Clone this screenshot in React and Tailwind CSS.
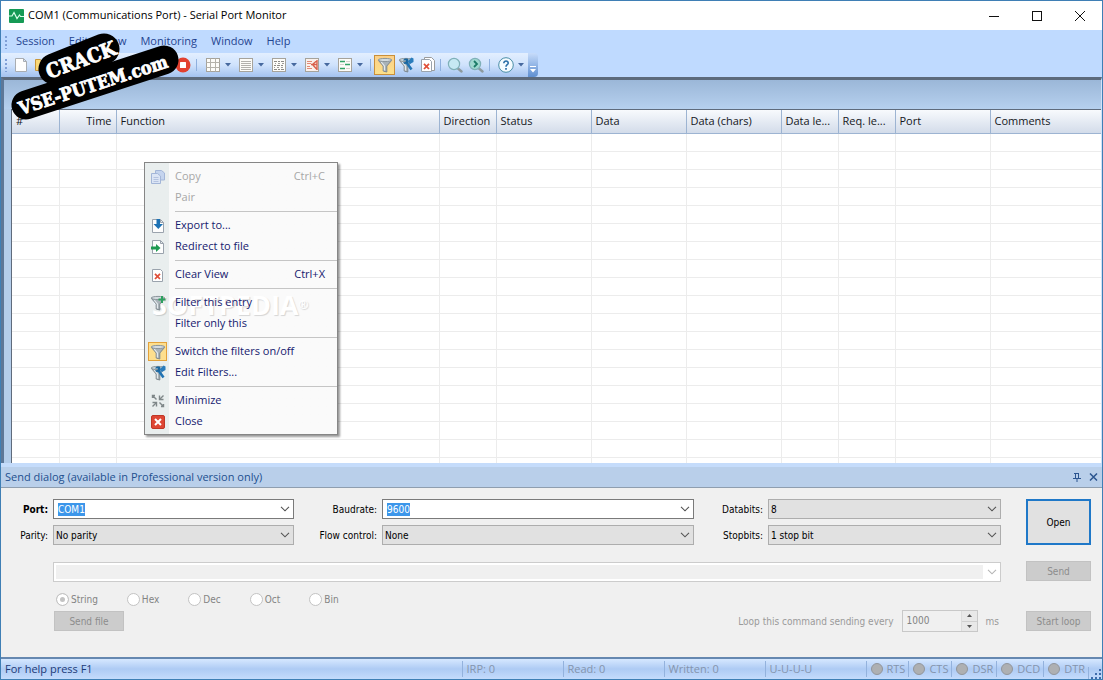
import React, { useState } from 'react';

const columns = [
  { label: '#', width: 'w-[47px]' },
  { label: 'Time', width: 'w-[57px]', align: 'text-right' },
  { label: 'Function', width: 'w-[323px]' },
  { label: 'Direction', width: 'w-[57px]' },
  { label: 'Status', width: 'w-[95px]' },
  { label: 'Data', width: 'w-[95px]' },
  { label: 'Data (chars)', width: 'w-[95px]' },
  { label: 'Data le...', width: 'w-[57px]' },
  { label: 'Req. le...', width: 'w-[57px]' },
  { label: 'Port', width: 'w-[95px]' },
  { label: 'Comments', width: '' }
];

const rows = Array.from({ length: 40 }, (_, i) => i);

const Icon = ({ size = 16, children }) => (
  <svg width={size} height={size} viewBox="0 0 16 16" fill="none" className="shrink-0" aria-hidden="true">
    {children}
  </svg>
);

const Page = ({ stroke = '#9aa3ad' }) => (
  <path d="M2.5 1.5h8l3 3v10h-11z M10.5 1.5v3h3" fill="#fdfdfd" stroke={stroke} />
);

const FunnelShape = () => (
  <>
    <path d="M1.2 3.2 6.2 9v5l3.6 1V9l5-5.8z" fill="#a9b3b9" stroke="#7b868c" />
    <path d="M4.2 5 7.4 9v4.5" stroke="#e4eaed" strokeWidth="1.2" />
    <ellipse cx="8" cy="3" rx="6.8" ry="1.6" fill="#d3dbdf" stroke="#8a959b" />
  </>
);

const NewIcon = () => (
  <Icon><path d="M2.5 1.5h8l3 3v10h-11z M10.5 1.5v3h3" fill="#fefefe" stroke="#a9adb2" /></Icon>
);

const FolderIcon = () => (
  <Icon><path d="M1.5 2.5h5l1 2h7v9h-13z" fill="#f9d978" stroke="#c9973a" /></Icon>
);

const StopIcon = () => (
  <Icon>
    <circle cx="8" cy="8" r="7.5" fill="#e2402f" />
    <rect x="5" y="5" width="6" height="6" rx="0.5" fill="#fff" />
  </Icon>
);

const GridIcon = () => (
  <Icon>
    <rect x="1.5" y="1.5" width="13" height="13" fill="#fdfcf8" stroke="#a6a39b" />
    <path d="M5.5 1.5v13M10.5 1.5v13M1.5 5.5h13M1.5 10.5h13" stroke="#b5b2aa" />
  </Icon>
);

const LinesIcon = () => (
  <Icon>
    <rect x="1.5" y="1.5" width="13" height="13" fill="#fdfcf8" stroke="#a6a39b" />
    <path d="M3 4.5h10M3 6.5h10M3 8.5h10M3 10.5h10M3 12.5h10" stroke="#b3b1ac" />
  </Icon>
);

const DumpIcon = () => (
  <Icon>
    <rect x="1.5" y="1.5" width="13" height="13" fill="#fdfcf8" stroke="#a6a39b" />
    <path d="M3 4.5h3M7 4.5h2M10 4.5h3M3 8.5h2M6 8.5h3M10 8.5h2M3 12.5h3M7 12.5h2M10 12.5h3" stroke="#8c8a86" />
    <path d="M4 6.5h1M7 6.5h2M11 6.5h2M3 10.5h1M6 10.5h2M10 10.5h2" stroke="#a09e9a" />
  </Icon>
);

const CompareIcon = () => (
  <Icon>
    <rect x="1.5" y="1.5" width="13" height="13" fill="#faf0eb" stroke="#a6a39b" />
    <path d="M3 4.5h5M3 6.5h4M3 9.5h3M3 11.5h5" stroke="#e28a76" />
    <path d="M13 3.5 8.5 7.5l4.5 5M7 7.5h6M13 3v10" stroke="#d8604c" strokeWidth="1.4" />
  </Icon>
);

const SplitIcon = () => (
  <Icon>
    <rect x="1.5" y="1.5" width="13" height="13" fill="#fdfcf8" stroke="#a6a39b" />
    <path d="M3 4.5h5M8 7.5h5M3 11.5h5" stroke="#34a367" strokeWidth="1.5" />
    <path d="M9 4.5h4M3 7.5h4M9 11.5h4" stroke="#d5d2cc" />
  </Icon>
);

const FilterIcon = () => <Icon><FunnelShape /></Icon>;

const EditFilterIcon = () => (
  <Icon>
    <FunnelShape />
    <path d="m8.5 5.5 5 7" stroke="#2173b3" strokeWidth="2.6" />
    <path d="M5 3.5c1-2.5 4.5-2.5 5.500-1L10 6.5 6.5 7 5 5.5l2.500-.5.5-1.5z" fill="#1b679f" />
    <path d="m9.5 4.5 4-4 2 1v3.5l-3.500 2z" fill="#2a7cbc" />
  </Icon>
);

const AddFilterIcon = () => (
  <Icon>
    <FunnelShape />
    <path d="M12 1v7M8.5 4.5h7" stroke="#2da05f" strokeWidth="2" />
  </Icon>
);

const ClearIcon = ({ stacked }) => (
  <Icon>
    {stacked && <path d="M5.5.5h7l3 3v10h-10z" fill="#fff" stroke="#9b9b9b" />}
    <path d="M2.5 2.5h8l2 2v10h-10z" fill="#fff" stroke="#9aa3ad" />
    <path d="m5 6.8 5 5.2m0-5.2-5 5.2" stroke="#e0503a" strokeWidth="1.8" />
  </Icon>
);

const SearchIcon = ({ next }) => (
  <Icon>
    <path d="m11 11.5 3.5 3" stroke="#8d9a9f" strokeWidth="2.4" strokeLinecap="round" />
    <circle cx="7" cy="7" r="5.6" fill={next ? '#9fd8cf' : '#c6e8f3'} stroke="#7fb0b8" strokeWidth="1.2" />
    {next && <path d="m6 4 3 3-3 3" stroke="#1b7a66" strokeWidth="1.8" />}
  </Icon>
);

const HelpIcon = () => (
  <Icon>
    <circle cx="8" cy="8" r="7.3" fill="#f4fbff" stroke="#4a8ea6" />
    <path d="M5.8 6.2c0-3 4.6-2.8 4.4 0C10.1 7.8 8 7.7 8 9.8" stroke="#2c6fa8" strokeWidth="1.6" />
    <path d="M8 11v1.7" stroke="#2c6fa8" strokeWidth="1.7" />
  </Icon>
);

const CopyIcon = () => (
  <Icon>
    <path d="M5.5 1.5h6l3 2.5v7h-9z" fill="#c4d4ee" stroke="#a3b6d8" />
    <path d="M1.5 4.5h6l3 2.5v7.5h-9z" fill="#dbe5f5" stroke="#a3b6d8" />
    <path d="M3.5 8.5h5M3.5 10.5h5M3.5 12.5h5" stroke="#b4c3e0" />
  </Icon>
);

const ExportIcon = () => (
  <Icon>
    <Page />
    <path d="M6.5 1h3.5v5h3l-4.7 5-4.8-5h3z" fill="#1d72b4" />
  </Icon>
);

const RedirectIcon = () => (
  <Icon>
    <Page />
    <path d="M1 7.5h5V5l4.5 4-4.5 4v-2.500H1z" fill="#1f9a52" />
  </Icon>
);

const MinimizeIcon = () => (
  <Icon>
    <path d="M2.5 5V2.5H5M2.5 2.5l4 4M13.5 2.5 10 6M2.5 13.5 6 10M13.5 13.5l-4-4M13.5 11v2.500H11" stroke="#7f8789" strokeWidth="1.4" />
    <path d="M9.5 2.5v4h4M2.5 9.5h4v4" stroke="#7f8789" strokeWidth="1.4" />
  </Icon>
);

const CloseIcon = () => (
  <Icon>
    <rect x="1.5" y="1.5" width="13" height="13" rx="1.5" fill="#de4634" stroke="#bf3727" />
    <path d="m5 5 6 6m0-6-6 6" stroke="#fff" strokeWidth="2" />
  </Icon>
);

const Chevron = ({ color = '#555' }) => (
  <svg width="10" height="6" viewBox="0 0 10 6" fill="none" aria-hidden="true">
    <path d="m1 .8 4 4 4-4" stroke={color} strokeWidth="1.1" />
  </svg>
);

const TitleBar = () => (
  <header className="flex h-[29px] shrink-0 items-center bg-white pr-px pl-2">
    <svg width="15" height="14" viewBox="0 0 15 14" aria-hidden="true">
      <rect width="15" height="14" rx="1" fill="#159a55" />
      <path d="M0 7h3l2-3.5 3 6L10.5 6l1 1.5H15" fill="none" stroke="#d9ffe9" strokeWidth="1.2" />
    </svg>
    <h1 className="ml-1 flex-1 text-[11px] text-black">COM1 (Communications Port) - Serial Port Monitor</h1>
    <button aria-label="Minimize" className="flex h-full w-[43px] items-center justify-center">
      <svg width="10" height="10"><path d="M0 5.5h10" stroke="#111" /></svg>
    </button>
    <button aria-label="Maximize" className="flex h-full w-[43px] items-center justify-center">
      <svg width="10" height="10"><rect x=".5" y=".5" width="9" height="9" fill="none" stroke="#111" /></svg>
    </button>
    <button aria-label="Close" className="flex h-full w-[43px] items-center justify-center">
      <svg width="10" height="10"><path d="m0 0 10 10M10 0 0 10" stroke="#111" /></svg>
    </button>
  </header>
);

const Grip = () => (
  <svg width="3" height="14" className="shrink-0" aria-hidden="true">
    <path d="M1 1v13" stroke="#7f9fd6" strokeWidth="2" strokeDasharray="2 2" />
  </svg>
);

const MenuBar = () => (
  <nav className="flex h-[23px] shrink-0 items-center bg-[#bfdaff] pl-1 text-[11px] text-[#1f4490]">
    <Grip />
    <div className="flex gap-[14px] pl-2">
      {['Session', 'Edit', 'View', 'Monitoring', 'Window', 'Help'].map((item) => (
        <button key={item}>{item}</button>
      ))}
    </div>
  </nav>
);

const Separator = () => (
  <span className="flex w-[7px] justify-center"><span className="h-3 w-px bg-[#8fb0de]" /></span>
);

const ToolButton = ({ label, className = '', children }) => (
  <button aria-label={label} className={`flex h-5 w-[21px] items-center justify-center ${className}`}>
    {children}
  </button>
);

const DropButton = ({ label, children }) => (
  <button aria-label={label} className="flex h-5 w-[33px] items-center gap-1 pl-[3px]">
    {children}
    <svg width="6" height="4" aria-hidden="true"><path d="M0 0h6L3 3.5z" fill="#47699f" /></svg>
  </button>
);

const Toolbar = () => (
  <div className="flex h-6 shrink-0 bg-[#bfdaff]">
    <div className="flex items-center bg-linear-to-b from-[#e3efff] via-[#cfe2fc] to-[#a3c2ef] pl-1">
      <Grip />
      <ToolButton label="New" className="ml-0.5"><NewIcon /></ToolButton>
      <ToolButton label="Open session"><FolderIcon /></ToolButton>
      <ToolButton label="Stop" className="ml-[120px]"><StopIcon /></ToolButton>
      <Separator />
      <div className="flex pl-0.5">
        <DropButton label="Table view"><GridIcon /></DropButton>
        <DropButton label="Line view"><LinesIcon /></DropButton>
        <DropButton label="Dump view"><DumpIcon /></DropButton>
        <DropButton label="Compare view"><CompareIcon /></DropButton>
        <DropButton label="Terminal view"><SplitIcon /></DropButton>
      </div>
      <Separator />
      <ToolButton label="Switch filters" className="border border-[#c98f3a] bg-linear-to-b from-[#fcd088] to-[#fbe08a]"><FilterIcon /></ToolButton>
      <ToolButton label="Edit filters"><EditFilterIcon /></ToolButton>
      <ToolButton label="Clear"><ClearIcon stacked /></ToolButton>
      <Separator />
      <ToolButton label="Find"><SearchIcon /></ToolButton>
      <ToolButton label="Find next"><SearchIcon next /></ToolButton>
      <Separator />
      <div className="flex pl-0.5"><DropButton label="Help"><HelpIcon /></DropButton></div>
    </div>
    <button aria-label="Toolbar options" className="flex w-[10px] items-end justify-center rounded-r bg-linear-to-b from-[#c7dcfa] to-[#5f8fd0] pb-1">
      <svg width="6" height="7" aria-hidden="true">
        <path d="M0 .5h6" stroke="#fff" />
        <path d="M0 3h6L3 6.5z" fill="#fff" />
      </svg>
    </button>
  </div>
);

const DataGrid = () => (
  <table className="w-full table-fixed border-collapse text-[11px] text-[#15171c]">
    <thead>
      <tr className="h-[23px] bg-linear-to-b from-[#f8fafd] to-[#d3dcea]">
        {columns.map((col) => (
          <th
            key={col.label}
            className={`overflow-hidden border-r border-b border-[#9db4d2] px-1 font-normal whitespace-nowrap last:border-r-0 ${col.width} ${col.align || 'text-left'}`}
          >
            {col.label}
          </th>
        ))}
      </tr>
    </thead>
    <tbody>
      {rows.map((row) => (
        <tr key={row} className="h-[18px]">
          {columns.map((col) => (
            <td key={col.label} className="border-r border-b border-[#ececec] last:border-r-0" />
          ))}
        </tr>
      ))}
    </tbody>
  </table>
);

const menuGroups = [
  [
    { label: 'Copy', shortcut: 'Ctrl+C', icon: <CopyIcon />, disabled: true },
    { label: 'Pair', disabled: true }
  ],
  [
    { label: 'Export to...', icon: <ExportIcon /> },
    { label: 'Redirect to file', icon: <RedirectIcon /> }
  ],
  [{ label: 'Clear View', shortcut: 'Ctrl+X', icon: <ClearIcon /> }],
  [
    { label: 'Filter this entry', icon: <AddFilterIcon /> },
    { label: 'Filter only this' }
  ],
  [
    { label: 'Switch the filters on/off', icon: <FilterIcon />, active: true },
    { label: 'Edit Filters...', icon: <EditFilterIcon /> }
  ],
  [
    { label: 'Minimize', icon: <MinimizeIcon /> },
    { label: 'Close', icon: <CloseIcon /> }
  ]
];

const ContextMenu = () => (
  <div className="absolute top-[161px] left-[143px] w-[194px] border border-[#868686] bg-linear-to-r from-[#e9eeee] from-[24px] to-[#fafafa] to-[24px] pt-[3px] pb-0.5 text-[11px] shadow-[2px_2px_2px_rgba(0,0,0,0.4)]">
    <span className="pointer-events-none absolute top-[124px] left-[7px] text-[27px] leading-9 font-bold text-white [text-shadow:1px_1px_1px_rgba(0,0,0,0.15)]">
      SOFTPEDIA<sup className="text-[12px]">®</sup>
    </span>
    {menuGroups.map((group, index) => (
      <div key={index} className="relative">
        {index > 0 && (
          <div className="flex h-[7px] items-center pl-[30px]"><span className="h-px w-full bg-[#c5c5c5]" /></div>
        )}
        {group.map((item) => (
          <button
            key={item.label}
            disabled={item.disabled}
            className={`flex h-[21px] w-full items-center pr-3 pl-[3px] text-left ${item.disabled ? 'text-[#a7a7a7]' : 'text-[#15206e]'}`}
          >
            <span className={`flex size-[19px] items-center justify-center border ${item.active ? 'border-[#e3a13a] bg-[#fddf8e]' : 'border-transparent'}`}>
              {item.icon}
            </span>
            <span className="ml-2 flex-1">{item.label}</span>
            <span>{item.shortcut}</span>
          </button>
        ))}
      </div>
    ))}
  </div>
);

const Label = ({ htmlFor, bold, children }) => (
  <label htmlFor={htmlFor} className={`pr-[5px] text-right ${bold ? 'font-bold' : ''}`}>{children}</label>
);

const ComboBox = ({ id, value }) => {
  const [text, setText] = useState(value);

  return (
    <div className="flex h-5 items-center border border-[#7a7a7a] bg-white pr-[3px] pl-1">
      <input
        id={id}
        value={text}
        onChange={(e) => setText(e.target.value)}
        className="h-[13px] field-sizing-content bg-[#3c96ea] text-white outline-none"
      />
      <button aria-label={`Show ${id} list`} className="ml-auto"><Chevron /></button>
    </div>
  );
};

const Select = ({ id, options }) => (
  <div className="relative">
    <select id={id} className="block h-5 w-full appearance-none border border-[#adadad] bg-[#e1e1e1] px-0.5 text-black outline-none">
      {options.map((option) => <option key={option}>{option}</option>)}
    </select>
    <span className="pointer-events-none absolute top-[7px] right-1"><Chevron /></span>
  </div>
);

const SendDialog = () => (
  <section className="shrink-0">
    <div className="flex h-[25px] items-center border-t-4 border-b border-t-[#c5dcfb] border-b-[#8f9eaf] bg-[#b9cfea] pr-1 pl-1 text-[11px] text-[#23508f]">
      <h2 className="flex-1">Send dialog (available in Professional version only)</h2>
      <button aria-label="Pin" className="mr-2">
        <svg width="8" height="9" fill="none" stroke="#2c5590"><path d="M2.5 0v5M1 .5h5M5.5 0v5M0 5.5h8M4 6v3" /></svg>
      </button>
      <button aria-label="Close dialog">
        <svg width="9" height="8" fill="none" stroke="#2c5590" strokeWidth="1.5"><path d="m1 .5 7 7m0-7-7 7" /></svg>
      </button>
    </div>

    <form className="flex h-[169px] gap-[25px] bg-[#f0f0f0] pt-[11px] pr-[11px] font-['DejaVu_Sans_Condensed','DejaVu_Sans',sans-serif] text-[10px] text-black" onSubmit={(e) => e.preventDefault()}>
      <div className="flex min-w-0 flex-1 flex-col">
        <div className="grid grid-cols-[52px_241fr_88px_312fr_74px_233fr] items-center gap-y-[6px]">
          <Label htmlFor="port" bold>Port:</Label>
          <ComboBox id="port" value="COM1" />
          <Label htmlFor="baudrate">Baudrate:</Label>
          <ComboBox id="baudrate" value="9600" />
          <Label htmlFor="databits">Databits:</Label>
          <Select id="databits" options={['8', '7', '6', '5']} />
          <Label htmlFor="parity">Parity:</Label>
          <Select id="parity" options={['No parity', 'Odd', 'Even']} />
          <Label htmlFor="flow">Flow control:</Label>
          <Select id="flow" options={['None', 'Hardware', 'Software']} />
          <Label htmlFor="stopbits">Stopbits:</Label>
          <Select id="stopbits" options={['1 stop bit', '2 stop bits']} />
        </div>

        <div className="mt-[17px] ml-[52px] flex h-5 items-center border border-[#ccc] bg-white p-0.5">
          <input aria-label="Command" disabled className="h-full min-w-0 flex-1 bg-[#f0f0f0]" />
          <button disabled aria-label="Show command list" className="pr-px pl-1"><Chevron color="#b5b5b5" /></button>
        </div>

        <div className="mt-[10px] ml-[55px] flex h-[14px] items-center gap-[29px] text-[#838383]">
          {['String', 'Hex', 'Dec', 'Oct', 'Bin'].map((mode) => (
            <label key={mode} className="flex items-center gap-0.5">
              <input
                type="radio"
                name="mode"
                disabled
                defaultChecked={mode === 'String'}
                className="size-[13px] appearance-none rounded-full border border-[#c3c3c3] bg-white checked:bg-[#c3c3c3] checked:shadow-[inset_0_0_0_3px_#fff]"
              />
              {mode}
            </label>
          ))}
        </div>

        <div className="mt-1 ml-[53px] flex h-[22px] items-center pr-0.5 text-[#9a9a9a]">
          <button disabled className="h-5 w-[70px] border border-[#c2c2c2] bg-[#cccccc] text-[#8c8c8c]">Send file</button>
          <label htmlFor="loop" className="ml-auto">Loop this command sending every</label>
          <div className="mr-2 ml-2 flex h-[22px] w-[76px] border border-[#c8c8c8] bg-[#f0f0f0]">
            <input id="loop" type="number" disabled defaultValue="1000" className="h-[18px] min-w-0 flex-1 [appearance:textfield] pl-1 text-[#838383]" />
            <div className="flex w-4 flex-col border-l border-[#dcdcdc] bg-[#e8e8e8]">
              <button disabled aria-label="Increase" className="flex flex-1 items-center justify-center border-b border-[#d0d0d0]">
                <svg width="5" height="3"><path d="M0 3h5L2.5 0z" fill="#555" /></svg>
              </button>
              <button disabled aria-label="Decrease" className="flex flex-1 items-center justify-center">
                <svg width="5" height="3"><path d="M0 0h5L2.5 3z" fill="#555" /></svg>
              </button>
            </div>
          </div>
          <span>ms</span>
        </div>
      </div>

      <div className="flex w-[65px] shrink-0 flex-col">
        <button className="h-[46px] border-2 border-[#1f78c8] bg-[#e1e1e1]">Open</button>
        <button disabled className="mt-4 h-5 border border-[#c2c2c2] bg-[#cccccc] text-[#8c8c8c]">Send</button>
        <button disabled className="mt-[30px] h-5 border border-[#c2c2c2] bg-[#cccccc] text-[#8c8c8c]">Start loop</button>
      </div>
    </form>
  </section>
);

const counters = ['IRP: 0', 'Read: 0', 'Written: 0', 'U-U-U-U'];

const lines = ['RTS', 'CTS', 'DSR', 'DCD', 'DTR'];

const StatusBar = () => (
  <footer className="flex h-[22px] shrink-0 items-center border-t-2 border-[#6688b0] bg-linear-to-b from-[#d6e8ff] via-[#aecbf4] to-[#c4dbfc] text-[11px] text-[#8494ad]">
    <span className="flex-1 pl-1 text-[#1c3a78]">For help press F1</span>
    {counters.map((counter) => (
      <span key={counter} className="w-[101px] border-l border-[#93b2dd] pl-1">{counter}</span>
    ))}
    {lines.map((line) => (
      <span key={line} className="flex items-center gap-1 border-l border-[#93b2dd] pr-[3px] pl-1">
        <span className="size-3 shrink-0 rounded-full border border-[#92969c] bg-[#aeb0b2]" />
        {line}
      </span>
    ))}
    <svg width="14" height="12" className="self-end border-l border-[#93b2dd]" aria-hidden="true">
      <path d="M10 2h2v2h-2zM10 6h2v2h-2zM10 10h2v2h-2zM6 6h2v2H6zM6 10h2v2H6zM2 10h2v2H2z" fill="#3f6bab" />
    </svg>
  </footer>
);

const Sticker = () => (
  <svg
    width="190"
    height="125"
    className="pointer-events-none absolute top-0 left-0"
    fontFamily="'DejaVu Serif Condensed', 'DejaVu Serif', serif"
    fontWeight="bold"
    fill="#fff"
    stroke="#fff"
    strokeWidth="0.8"
    strokeLinejoin="round"
  >
    <path d="m53 68 50-20" stroke="#000" strokeWidth="31" strokeLinecap="round" />
    <path d="M25 104 163 59" stroke="#000" strokeWidth="29" strokeLinecap="round" />
    <text x="48" y="78" fontSize="20" transform="rotate(-20 48 78)">CRACK</text>
    <text x="20" y="114" fontSize="18" transform="rotate(-18 20 114)">VSE-PUTEM.com</text>
  </svg>
);

const App = () => (
  <div className="relative flex h-screen flex-col overflow-hidden border border-[#3f7fb5] bg-[#bfdaff] font-['Open_Sans',sans-serif]">
    <TitleBar />
    <MenuBar />
    <Toolbar />
    <main className="flex min-h-0 flex-1 flex-col border-t-3 border-r border-l-3 border-t-[#5c6a7c] border-r-[#cfe2fa] border-l-[#5d7797] bg-[#b4cdea]">
      <div className="h-[29px] shrink-0 bg-linear-to-b from-[#9bb7d8] to-[#b6d0ee]" />
      <div className="min-h-0 flex-1 pl-[7px]">
        <div className="h-full overflow-hidden border-t border-l border-[#5f6b7c] bg-white">
          <DataGrid />
        </div>
      </div>
    </main>
    <SendDialog />
    <StatusBar />
    <ContextMenu />
    <Sticker />
  </div>
);

export default App;
